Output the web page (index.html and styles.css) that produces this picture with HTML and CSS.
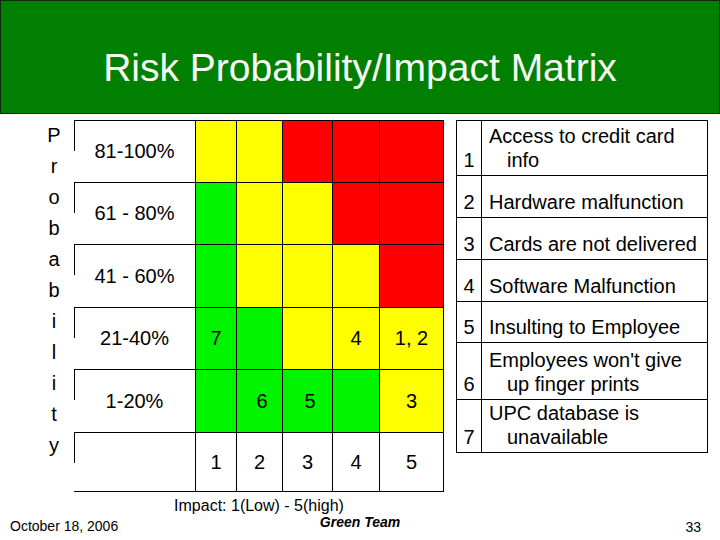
FILE: index.html
```html
<!DOCTYPE html>
<html lang="en">
<head>
<meta charset="utf-8">
<title>Risk Probability/Impact Matrix</title>
<link rel="stylesheet" href="styles.css">
</head>
<body>
<header class="title">Risk Probability/Impact Matrix</header>
<main class="content">
  <div class="axis-v">
    <span>P</span><span>r</span><span>o</span><span>b</span><span>a</span><span>b</span><span>i</span><span>l</span><span>i</span><span>t</span><span>y</span>
  </div>
  <div class="matrix-wrap">
    <div class="matrix">
      <div class="label">81-100%</div>
      <div class="cell y"></div><div class="cell y"></div><div class="cell r"></div><div class="cell r"></div><div class="cell r end"></div>

      <div class="label">61 - 80%</div>
      <div class="cell g"></div><div class="cell y"></div><div class="cell y"></div><div class="cell r"></div><div class="cell r end"></div>

      <div class="label">41 - 60%</div>
      <div class="cell g"></div><div class="cell y"></div><div class="cell y"></div><div class="cell y"></div><div class="cell r end"></div>

      <div class="label">21-40%</div>
      <div class="cell g">7</div><div class="cell g"></div><div class="cell y"></div><div class="cell y">4</div><div class="cell y end">1, 2</div>

      <div class="label">1-20%</div>
      <div class="cell g"></div><div class="cell g nudge">6</div><div class="cell g nudge">5</div><div class="cell g"></div><div class="cell y end">3</div>

      <div class="label base"></div>
      <div class="cell base">1</div><div class="cell base">2</div><div class="cell base">3</div><div class="cell base">4</div><div class="cell base end">5</div>
    </div>
    <div class="caption">Impact: 1(Low) - 5(high)</div>
  </div>
  <div class="legend">
    <div class="n">1</div><div class="t">Access to credit card<br>info</div>
    <div class="n">2</div><div class="t">Hardware malfunction</div>
    <div class="n">3</div><div class="t">Cards are not delivered</div>
    <div class="n">4</div><div class="t">Software Malfunction</div>
    <div class="n">5</div><div class="t">Insulting to Employee</div>
    <div class="n">6</div><div class="t">Employees won't give<br>up finger prints</div>
    <div class="n last">7</div><div class="t last">UPC database is<br>unavailable</div>
  </div>
</main>
<footer class="footer">
  <div class="date">October 18, 2006</div>
  <div class="team">Green Team</div>
  <div class="page">33</div>
</footer>
</body>
</html>
```
FILE: styles.css
```css
* { box-sizing: border-box; }
html, body { margin: 0; padding: 0; }
body {
  width: 720px;
  height: 540px;
  overflow: hidden;
  background: #fff;
  color: #000;
  font-family: "Liberation Sans", Arial, sans-serif;
  display: flex;
  flex-direction: column;
}
.title {
  height: 114px;
  background: #017f01;
  border: 1px solid #0c2d0c;
  color: #fbfbf5;
  font-size: 39px;
  line-height: 45px;
  padding-top: 44px;
  text-align: center;
}
.content {
  display: flex;
  align-items: flex-start;
  padding-left: 34px;
  margin-top: 6px;
}
.axis-v {
  width: 40px;
  display: flex;
  flex-direction: column;
  align-items: center;
  font-size: 20px;
  line-height: 31px;
}
.matrix-wrap {
  width: 370px;
  display: flex;
  flex-direction: column;
}
.matrix {
  display: grid;
  grid-template-columns: 121px 41px 46px 50px 47px 65px;
  grid-template-rows: 62px 62px 63px 62px 63px 60px;
  font-size: 20px;
}
.label {
  position: relative;
  border-top: 1px solid #000;
  display: flex;
  align-items: center;
  justify-content: center;
}
.label::before {
  content: "";
  position: absolute;
  left: 0;
  top: 0;
  width: 1px;
  height: 30px;
  background: #000;
}
.cell {
  border-top: 1px solid #000;
  border-left: 1px solid #000;
  display: flex;
  align-items: center;
  justify-content: center;
}
.cell.end { border-right: 1px solid #000; }
.base { border-bottom: 1px solid #000; }
.nudge { padding-left: 5px; }
.y { background: #ffff00; }
.r { background: #ff0000; }
.g { background: #00f400; }
.caption {
  margin-top: 6px;
  text-align: center;
  font-size: 16px;
  line-height: 16px;
}
.legend {
  margin-left: 12px;
  display: grid;
  grid-template-columns: 25px 227px;
  grid-template-rows: 55px 42px 42px 42px 41px 57px 54px;
  font-size: 20px;
  line-height: 24px;
}
.n, .t {
  border-top: 1px solid #000;
  border-left: 1px solid #000;
  display: flex;
  flex-direction: column;
  justify-content: flex-end;
  padding-bottom: 3px;
  white-space: nowrap;
}
.n { align-items: center; }
.t {
  border-right: 1px solid #000;
  padding-left: 25px;
  text-indent: -18px;
  display: block;
  padding-top: 0;
}
.legend .t {
  display: flex;
  flex-direction: column;
  justify-content: flex-end;
}
.last { border-bottom: 1px solid #000; }
.footer {
  margin-top: auto;
  height: 26px;
  display: grid;
  grid-template-columns: 1fr auto 1fr;
  align-items: start;
  padding: 0 10px;
  font-size: 14px;
  line-height: 16px;
}
.date { margin-top: 4px; }
.team { font-weight: bold; font-style: italic; }
.page { margin-top: 5px; text-align: right; padding-right: 9px; }
```
